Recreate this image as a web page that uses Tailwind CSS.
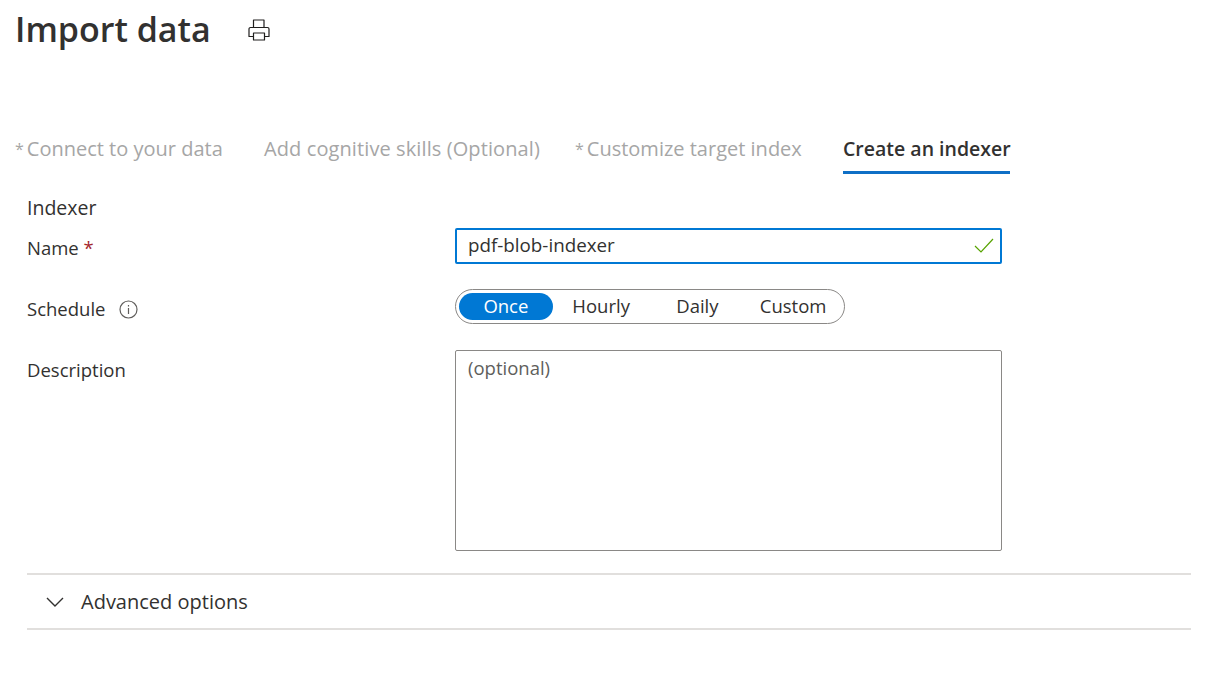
<!DOCTYPE html>
<html lang="en">
<head>
<meta charset="utf-8">
<title>Import data</title>
<script src="https://cdn.jsdelivr.net/npm/@tailwindcss/browser@4"></script>
</head>
<body class="bg-white text-[#323130] font-['Open_Sans','Noto_Sans',sans-serif] text-[18.5px] leading-[28px] w-[1206px] h-[692px] overflow-hidden">

    <!-- Title -->
    <header class="flex items-center h-[60px] pl-[15px]">
        <h1 class="text-[34px] h-[60px] leading-[58px] font-semibold w-[233px] whitespace-nowrap">Import data</h1>
        <svg class="w-[22px] h-[22px]" viewBox="0 0 22 22" fill="none" stroke="#201f1e" stroke-width="1.2" stroke-linejoin="round">
            <path d="M5.5 8V1h10.5v7"/>
            <path d="M5.5 17.5H1v-7.5a1.5 1.5 0 0 1 1.5-1.5h17a1.5 1.5 0 0 1 1.5 1.5v7.5h-5"/>
            <path d="M5.5 14h11v7h-11z"/>
        </svg>
    </header>

    <!-- Steps -->
    <nav class="flex mt-[75px] pl-[15px] h-[39px] text-[20px] text-[#a6a6a6] whitespace-nowrap">
        <a class="flex h-[39px] w-[249px]"><span class="text-[16px] mr-[3px]">*</span>Connect to your data</a>
        <a class="h-[39px] w-[311px] tracking-[0.1px]">Add cognitive skills (Optional)</a>
        <a class="flex h-[39px] w-[268px]"><span class="text-[16px] mr-[3px]">*</span>Customize target index</a>
        <a class="h-[39px] w-[167px] text-[19.5px] font-semibold text-[#323130] border-b-[3px] border-[#0f6fc6]">Create an indexer</a>
    </nav>

    <main class="pl-[27px] pr-[15px]">
        <div class="h-[28px] mt-[20px] text-[19.5px]">Indexer</div>

        <!-- Form rows -->
        <div class="flex h-[67px] pt-[6px]">
            <label class="w-[428px] pt-[6px]">Name <span class="text-[#a4262c]">*</span></label>
            <div class="relative w-[547px] h-[36px] border-2 border-[#0078d4] rounded-[2px] px-[11px] py-[1px] text-[18.8px]">
                pdf-blob-indexer
                <svg class="absolute right-[6px] top-[8px] w-[20px] h-[16px]" viewBox="0 0 20 16" fill="none" stroke="#57a300" stroke-width="1.2">
                    <path d="M1 8l6 6L19 1"/>
                </svg>
            </div>
        </div>

        <div class="flex h-[61px]">
            <label class="flex items-center h-[38px] w-[428px] pt-[2px]">Schedule
                <svg class="w-[19px] h-[19px] ml-[14px]" viewBox="0 0 19 19" fill="none" stroke="#605e5c" stroke-width="1.2">
                    <circle cx="9.5" cy="9.5" r="8.5"/>
                    <path d="M9.5 8v6M9.5 5v1.6"/>
                </svg>
            </label>
            <div class="flex items-center w-[390px] h-[35px] border border-[#8a8886] rounded-full px-[3px]">
                <span class="flex items-center justify-center w-[94px] h-[27px] pb-[2px] rounded-full bg-[#0078d4] text-white">Once</span>
                <span class="w-[97px] pb-[2px] text-center">Hourly</span>
                <span class="w-[96px] pb-[2px] text-center">Daily</span>
                <span class="w-[96px] pb-[2px] text-center">Custom</span>
            </div>
        </div>

        <div class="flex h-[201px]">
            <label class="w-[428px] pt-[6px]">Description</label>
            <div class="w-[547px] h-[201px] border border-[#8a8886] rounded-[2px] px-[12px] py-[3px] text-[#605e5c]">(optional)</div>
        </div>

        <!-- Advanced options -->
        <div class="flex items-center mt-[22px] h-[57px] border-y-2 border-[#e1dfdd] pl-[19px] w-[1164px] text-[20px]">
            <svg class="w-[18px] h-[10px] mr-[17px]" viewBox="0 0 18 10" fill="none" stroke="#323130" stroke-width="1.4">
                <path d="M1 1l8 8 8-8"/>
            </svg>
            Advanced options
        </div>
    </main>
</body>
</html>
